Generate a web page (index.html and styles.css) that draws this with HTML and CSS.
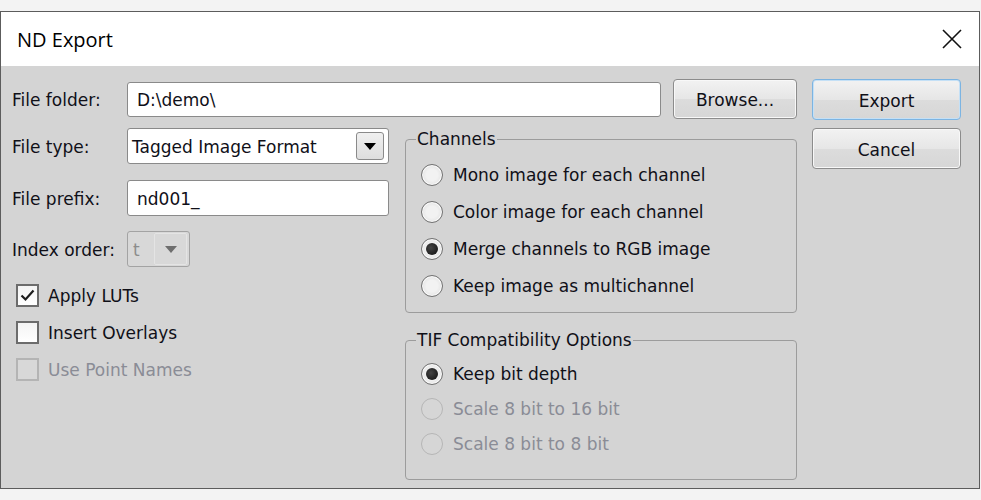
FILE: index.html
```html
<!DOCTYPE html>
<html lang="en">
<head>
    <meta charset="UTF-8">
    <meta name="viewport" content="width=device-width, initial-scale=1.0">
    <title>ND Export</title>
    <link rel="stylesheet" href="styles.css">
</head>
<body>
    <div class="dialog">
        <div class="titlebar">
            <span class="title">ND Export</span>
            <svg class="close" width="20" height="20" viewBox="0 0 20 20">
                <path d="M1 1 L19 19 M19 1 L1 19" stroke="#111" stroke-width="1.6" fill="none"/>
            </svg>
        </div>
        <div class="content">
            <div class="main">
                <div class="folder-row">
                    <span class="lbl">File folder:</span>
                    <div class="textbox folder">D:\demo\</div>
                    <div class="btn browse">Browse...</div>
                </div>
                <div class="lower">
                    <div class="left">
                        <div class="field type-row">
                            <span class="lbl">File type:</span>
                            <div class="combo">
                                <span class="combo-text">Tagged Image Format</span>
                                <span class="combo-btn"><span class="arrow"></span></span>
                            </div>
                        </div>
                        <div class="field prefix-row">
                            <span class="lbl">File prefix:</span>
                            <div class="textbox prefix">nd001_</div>
                        </div>
                        <div class="field index-row">
                            <span class="lbl">Index order:</span>
                            <div class="combo small disabled">
                                <span class="combo-text">t</span>
                                <span class="combo-btn"><span class="arrow"></span></span>
                            </div>
                        </div>
                        <div class="check checked">
                            <span class="box">
                                <svg width="17" height="17" viewBox="0 0 17 17"><path d="M2.5 8.5 L6.5 12.5 L14.5 3.5" stroke="#1c1c1c" stroke-width="2.2" fill="none"/></svg>
                            </span>
                            Apply LUTs
                        </div>
                        <div class="check">
                            <span class="box"></span>
                            Insert Overlays
                        </div>
                        <div class="check disabled">
                            <span class="box"></span>
                            Use Point Names
                        </div>
                    </div>
                    <div class="right">
                        <fieldset class="group channels">
                            <legend>Channels</legend>
                            <div class="radio"><span class="dot"></span>Mono image for each channel</div>
                            <div class="radio"><span class="dot"></span>Color image for each channel</div>
                            <div class="radio on"><span class="dot"></span>Merge channels to RGB image</div>
                            <div class="radio"><span class="dot"></span>Keep image as multichannel</div>
                        </fieldset>
                        <fieldset class="group tif">
                            <legend>TIF Compatibility Options</legend>
                            <div class="radio on"><span class="dot"></span>Keep bit depth</div>
                            <div class="radio disabled"><span class="dot"></span>Scale 8 bit to 16 bit</div>
                            <div class="radio disabled"><span class="dot"></span>Scale 8 bit to 8 bit</div>
                        </fieldset>
                    </div>
                </div>
            </div>
            <div class="buttons">
                <div class="btn default">Export</div>
                <div class="btn">Cancel</div>
            </div>
        </div>
    </div>
</body>
</html>
```

FILE: styles.css
```css
* {
    box-sizing: border-box;
    margin: 0;
    padding: 0;
}
body {
    font-family: "DejaVu Sans", sans-serif;
    font-size: 17px;
    background-color: #f3f3f3;
    color: #101018;
    padding-top: 11px;
}
.dialog {
    width: 980px;
    height: 478px;
    border: 1px solid #5c5c5c;
    display: flex;
    flex-direction: column;
}
.titlebar {
    height: 54px;
    background-color: #fff;
    display: flex;
    align-items: center;
    justify-content: space-between;
    padding: 0 17px 0 16px;
}
.title {
    font-family: "Open Sans", sans-serif;
    font-size: 20px;
    color: #000;
}
.close {
    display: block;
}
.content {
    flex: 1;
    background-color: #d4d4d4;
    display: flex;
    padding: 13px 18px 0 11px;
    gap: 15px;
}
.main {
    width: 785px;
}
.lbl {
    width: 115px;
    flex-shrink: 0;
    padding-top: 2px;
}
.folder-row {
    display: flex;
    align-items: center;
    height: 40px;
}
.textbox {
    height: 36px;
    background-color: #fff;
    border: 1px solid #8a8a8a;
    border-radius: 3px;
    display: flex;
    align-items: center;
    padding: 2px 0 0 9px;
}
.textbox.folder {
    width: 534px;
    height: 35px;
    margin-right: 12px;
}
.textbox.prefix {
    width: 263px;
}
.btn {
    height: 40px;
    border: 1px solid #8c8c8c;
    border-radius: 4px;
    background: linear-gradient(#f2f2f2, #e6e6e6 50%, #dcdcdc 51%, #d6d6d6);
    display: flex;
    align-items: center;
    justify-content: center;
    padding-top: 2px;
    box-shadow: inset 0 0 0 1px #f8f8f8;
}
.browse {
    width: 124px;
}
.lower {
    display: flex;
    gap: 16px;
}
.left {
    width: 377px;
}
.field {
    display: flex;
    align-items: center;
    height: 36px;
}
.type-row {
    margin-top: 9px;
}
.prefix-row {
    margin-top: 16px;
}
.index-row {
    margin-top: 15px;
}
.combo {
    width: 263px;
    height: 36px;
    background-color: #fff;
    border: 1px solid #8a8a8a;
    border-radius: 3px;
    display: flex;
    align-items: center;
    justify-content: space-between;
    padding: 0 4px 0 4px;
}
.combo-text {
    padding-top: 2px;
}
.combo-btn {
    width: 28px;
    height: 28px;
    border: 1px solid #8a8a8a;
    border-radius: 3px;
    background: linear-gradient(#f0f0f0, #dedede);
    display: flex;
    align-items: center;
    justify-content: center;
}
.arrow {
    width: 0;
    height: 0;
    border-left: 6px solid transparent;
    border-right: 6px solid transparent;
    border-top: 7px solid #000;
}
.combo.small {
    width: 63px;
    padding: 0 2px 0 5px;
}
.combo.disabled {
    background-color: #d8d8d8;
    border-color: #a3a3a3;
    color: #8c8c8c;
}
.combo.disabled .combo-btn {
    width: 33px;
    height: 32px;
    border-color: #e4e4e4;
    background: #d8d8d8;
    border-radius: 2px;
}
.combo.disabled .arrow {
    border-top-color: #6e6e6e;
}
.check {
    display: flex;
    align-items: center;
    gap: 9px;
    height: 23px;
    margin: 14px 0 0 4px;
}
.index-row + .check {
    margin-top: 17px;
}
.check .box {
    width: 23px;
    height: 23px;
    border: 2px solid #6c6c6c;
    background: linear-gradient(#f4f4f4, #ffffff);
    display: flex;
    align-items: center;
    justify-content: center;
}
.check.disabled {
    color: #8a8c96;
}
.check.disabled .box {
    border-color: #b4b4b4;
    background: #d8d8d8;
}
.right {
    width: 392px;
}
.group {
    border: 1px solid #9c9c9c;
    border-radius: 4px;
    padding: 7px 15px 8px 15px;
}
.group legend {
    line-height: 20px;
    margin-left: -5px;
    padding: 0 1px;
}
.channels {
    margin-top: 10px;
}
.tif {
    margin-top: 17px;
    padding: 6px 15px 18px 15px;
}
.radio {
    display: flex;
    align-items: center;
    gap: 10px;
    height: 37px;
}
.tif .radio {
    height: 35px;
}
.radio .dot {
    width: 22px;
    height: 22px;
    border: 1px solid #727272;
    border-radius: 50%;
    background: radial-gradient(circle, #f2f2f2 40%, #dadada 100%);
    box-shadow: inset 0 0 0 1px #fafafa;
    position: relative;
}
.radio.on .dot::after {
    content: "";
    position: absolute;
    left: 4px;
    top: 4px;
    width: 12px;
    height: 12px;
    border-radius: 50%;
    background: radial-gradient(circle at 40% 40%, #444, #0e0e0e);
}
.radio.disabled {
    color: #8a8c96;
}
.radio.disabled .dot {
    border-color: #b6b6b6;
    background: #d6d6d6;
    box-shadow: none;
}
.buttons {
    width: 149px;
    display: flex;
    flex-direction: column;
    gap: 8px;
}
.buttons .btn {
    height: 41px;
}
.btn.default {
    border-color: #7cb4e2;
    box-shadow: inset 0 0 0 1px #c4e0f6;
}
```
